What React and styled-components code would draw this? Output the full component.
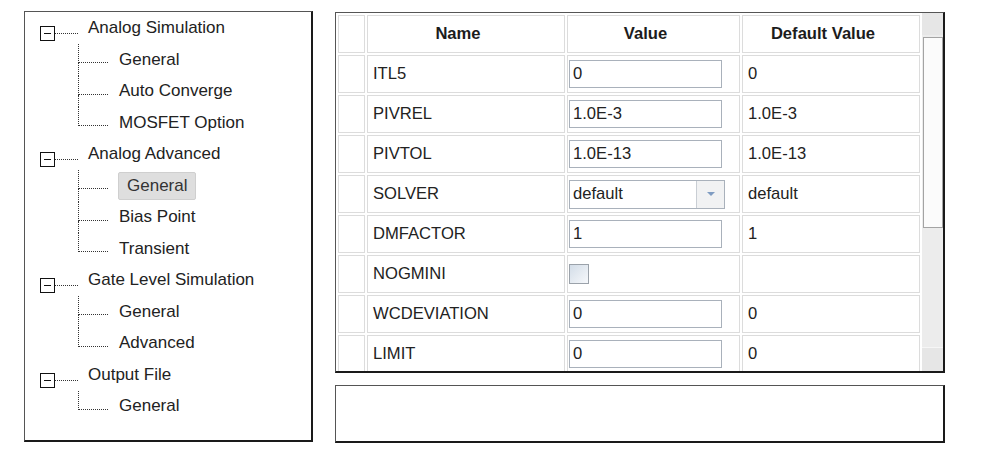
import styled, { createGlobalStyle } from 'styled-components';

const GlobalStyle = createGlobalStyle`
  html, body {
    margin: 0;
    padding: 0;
    background: #fff;
  }
  body {
    font-family: "Liberation Sans", Arial, sans-serif;
    color: #222;
  }
`;

const Page = styled.div`
  display: flex;
  align-items: flex-start;
  gap: 22px;
  padding: 11px 0 0 24px;
`;

const Panel = styled.div`
  box-sizing: border-box;
  border: 1px solid #555;
  border-right: 2px solid #1a1a1a;
  border-bottom: 2px solid #1a1a1a;
  background: #fff;
`;

/* ---------- tree ---------- */

const TreePanel = styled(Panel)`
  width: 289px;
  height: 431px;
  padding: 0.5px 0 0 15px;
  font-size: 17px;
`;

const GroupRow = styled.div`
  display: flex;
  align-items: center;
  height: 31.5px;
`;

const Connector = styled.div`
  display: flex;
  align-items: center;
  align-self: flex-start;
  margin-top: 13.5px;
`;

const ToggleBox = styled.div`
  box-sizing: border-box;
  width: 15px;
  height: 15px;
  border: 1px solid #111;
  display: flex;
  align-items: center;
  justify-content: center;
  &::after {
    content: '';
    width: 7px;
    height: 1px;
    background: #111;
  }
`;

const HLine = styled.div`
  width: 23px;
  border-top: 1px dotted #333;
`;

const Label = styled.span`
  margin-left: ${(p) => (p.$selected ? 10 : 11)}px;
  padding: ${(p) => (p.$selected ? '3px 8px 3px 8px' : '0')};
  background: ${(p) => (p.$selected ? '#dedede' : 'transparent')};
  border: ${(p) => (p.$selected ? '1px solid #cfcfcf' : 'none')};
  border-radius: 2px;
  color: ${(p) => (p.$selected ? '#333' : '#222')};
  white-space: nowrap;
`;

const GroupLabel = styled.span`
  margin-left: 10px;
  white-space: nowrap;
`;

const ChildRow = styled.div`
  display: flex;
  align-items: center;
  height: 31.5px;
  padding-left: 38px;
`;

const Elbow = styled.div`
  align-self: stretch;
  width: 30px;
  display: flex;
  flex-direction: column;
`;

const ElbowTop = styled.div`
  box-sizing: border-box;
  height: 19px;
  border-left: 1px dotted #333;
  border-bottom: 1px dotted #333;
`;

const ElbowRest = styled.div`
  flex: 1;
  border-left: ${(p) => (p.$last ? 'none' : '1px dotted #333')};
`;

/* ---------- table ---------- */

const RightColumn = styled.div`
  display: flex;
  flex-direction: column;
  gap: 12px;
  margin-top: 1px;
`;

const TablePanel = styled(Panel)`
  width: 610px;
  height: 361px;
  display: flex;
  overflow: hidden;
`;

const TableArea = styled.div`
  flex: 1;
  overflow: hidden;
`;

const Table = styled.table`
  width: 586px;
  table-layout: fixed;
  border-collapse: separate;
  border-spacing: 2px;
  font-size: 16.6px;
`;

const Th = styled.th`
  box-sizing: border-box;
  width: ${(p) => p.$w}px;
  height: 38px;
  border: 1px solid #dcdcdc;
  padding: 0 16px 0 0;
  text-align: center;
  font-weight: bold;
  color: #1c1c1c;
`;

const Td = styled.td`
  box-sizing: border-box;
  height: 38px;
  border: 1px solid #dcdcdc;
  padding: ${(p) => (p.$tight ? '0 1px' : '0 4px 0 5px')};
  vertical-align: middle;
  white-space: nowrap;
  color: #222;
`;

const TextInput = styled.input`
  box-sizing: border-box;
  display: block;
  width: 153px;
  height: 28px;
  border: 1px solid #a9b1bb;
  padding: 0 3px;
  font: inherit;
  color: #222;
  background: #fff;
  outline: none;
`;

const Select = styled.div`
  box-sizing: border-box;
  display: flex;
  width: 156px;
  height: 29px;
  border: 1px solid #a9b1bb;
  background: #fff;
`;

const SelectValue = styled.div`
  flex: 1;
  display: flex;
  align-items: center;
  padding: 0 3px;
`;

const SelectButton = styled.div`
  width: 27px;
  display: flex;
  align-items: center;
  justify-content: center;
  border-left: 1px solid #c9ced4;
  background: #f1f2f3;
  &::after {
    content: '';
    border-left: 4px solid transparent;
    border-right: 4px solid transparent;
    border-top: 4px solid #7f9cc2;
  }
`;

const Checkbox = styled.div`
  box-sizing: border-box;
  width: 20px;
  height: 20px;
  border: 1px solid #9ba2aa;
  background: linear-gradient(135deg, #d3dde8, #f6f8fb);
`;

const Scrollbar = styled.div`
  width: 21px;
  display: flex;
  flex-direction: column;
  background: #ececec;
`;

const ScrollArrow = styled.div`
  height: ${(p) => p.$h}px;
  background: #e6e6e6;
  border-top: ${(p) => (p.$bottom ? '1px solid #f6f6f6' : 'none')};
`;

const ScrollThumb = styled.div`
  box-sizing: border-box;
  height: 191px;
  margin: 2px 0 0 1px;
  border: 1px solid #a3a3a3;
  background: #fbfbfb;
`;

const ScrollTrack = styled.div`
  flex: 1;
`;

const MessageBox = styled(Panel)`
  width: 610px;
  height: 58px;
`;

const tree = [
  { title: 'Analog Simulation', items: ['General', 'Auto Converge', 'MOSFET Option'] },
  { title: 'Analog Advanced', items: ['General', 'Bias Point', 'Transient'], selected: 0 },
  { title: 'Gate Level Simulation', items: ['General', 'Advanced'] },
  { title: 'Output File', items: ['General'] },
];

const rows = [
  { name: 'ITL5', value: '0', def: '0' },
  { name: 'PIVREL', value: '1.0E-3', def: '1.0E-3' },
  { name: 'PIVTOL', value: '1.0E-13', def: '1.0E-13' },
  { name: 'SOLVER', value: 'default', def: 'default', kind: 'select' },
  { name: 'DMFACTOR', value: '1', def: '1' },
  { name: 'NOGMINI', value: '', def: '', kind: 'check' },
  { name: 'WCDEVIATION', value: '0', def: '0' },
  { name: 'LIMIT', value: '0', def: '0' },
];

const renderEditor = (row) => {
  if (row.kind === 'select') {
    return (
      <Select>
        <SelectValue>{row.value}</SelectValue>
        <SelectButton />
      </Select>
    );
  }
  if (row.kind === 'check') return <Checkbox />;
  return <TextInput defaultValue={row.value} />;
};

const App = () => {
  return (
    <>
      <GlobalStyle />
      <Page>
        <TreePanel>
          {tree.map((group) => (
            <div key={group.title}>
              <GroupRow>
                <Connector>
                  <ToggleBox />
                  <HLine />
                </Connector>
                <GroupLabel>{group.title}</GroupLabel>
              </GroupRow>
              {group.items.map((item, i) => (
                <ChildRow key={item + i}>
                  <Elbow>
                    <ElbowTop />
                    <ElbowRest $last={i === group.items.length - 1} />
                  </Elbow>
                  <Label $selected={group.selected === i}>{item}</Label>
                </ChildRow>
              ))}
            </div>
          ))}
        </TreePanel>

        <RightColumn>
          <TablePanel>
            <TableArea>
              <Table>
                <thead>
                  <tr>
                    <Th $w={27}></Th>
                    <Th $w={198}>Name</Th>
                    <Th $w={173}>Value</Th>
                    <Th $w={178}>Default Value</Th>
                  </tr>
                </thead>
                <tbody>
                  {rows.map((row) => (
                    <tr key={row.name}>
                      <Td></Td>
                      <Td>{row.name}</Td>
                      <Td $tight>{renderEditor(row)}</Td>
                      <Td>{row.def}</Td>
                    </tr>
                  ))}
                </tbody>
              </Table>
            </TableArea>
            <Scrollbar>
              <ScrollArrow $h={22} />
              <ScrollThumb />
              <ScrollTrack />
              <ScrollArrow $h={23} $bottom />
            </Scrollbar>
          </TablePanel>
          <MessageBox />
        </RightColumn>
      </Page>
    </>
  );
};

export default App;
